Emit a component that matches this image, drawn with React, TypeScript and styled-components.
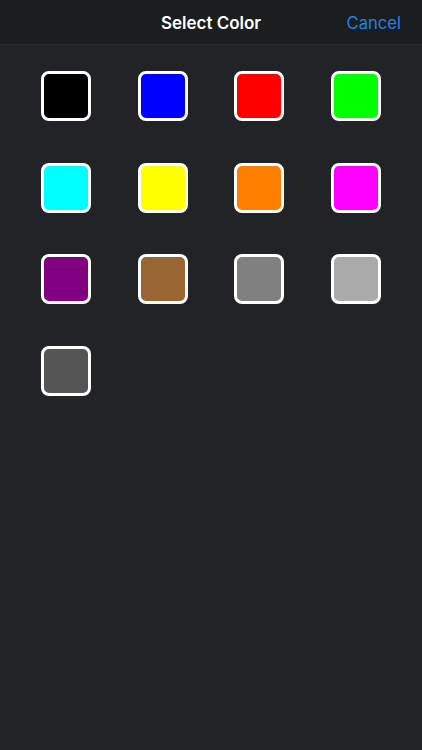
import styled, { createGlobalStyle } from "styled-components";

const GlobalStyle = createGlobalStyle`
  html, body {
    margin: 0;
    padding: 0;
    background: #222326;
  }
  body {
    font-family: "Inter", "Liberation Sans", sans-serif;
    -webkit-font-smoothing: antialiased;
  }
`;

const Screen = styled.div`
  width: 422px;
  height: 750px;
  background: #222326;
  display: flex;
  flex-direction: column;
`;

const Header = styled.header`
  height: 44px;
  flex: 0 0 44px;
  background: #1c1d1f;
  border-bottom: 1px solid #2b2c2f;
  display: grid;
  grid-template-columns: 1fr auto 1fr;
  align-items: center;
  padding: 2px 21px 0 21px;
  box-sizing: border-box;
  height: 45px;
  flex-basis: 45px;
`;

const Title = styled.h1`
  grid-column: 2;
  margin: 0;
  font-size: 17px;
  font-weight: 600;
  color: #ffffff;
`;

const CancelButton = styled.button`
  grid-column: 3;
  justify-self: end;
  background: none;
  border: none;
  padding: 0;
  font-family: inherit;
  font-size: 16.6px;
  color: #1f84e6;
  cursor: pointer;
`;

const Grid = styled.div`
  display: grid;
  grid-template-columns: repeat(4, 50px);
  justify-content: space-between;
  row-gap: 41.5px;
  padding: 26px 41px 0 41px;
`;

const Swatch = styled.button<{ $color: string }>`
  width: 50px;
  height: 50px;
  box-sizing: border-box;
  border: 3px solid #ffffff;
  border-radius: 8px;
  background: ${({ $color }) => $color};
  padding: 0;
  cursor: pointer;
`;

const colors = [
  "#000000",
  "#0000ff",
  "#ff0000",
  "#00ff00",
  "#00ffff",
  "#ffff00",
  "#ff8000",
  "#ff00ff",
  "#800080",
  "#996633",
  "#808080",
  "#aaaaaa",
  "#555555",
];

export default function App() {
  return (
    <>
      <GlobalStyle />
      <Screen>
        <Header>
          <Title>Select Color</Title>
          <CancelButton>Cancel</CancelButton>
        </Header>
        <Grid>
          {colors.map((c) => (
            <Swatch key={c} $color={c} aria-label={c} />
          ))}
        </Grid>
      </Screen>
    </>
  );
}
